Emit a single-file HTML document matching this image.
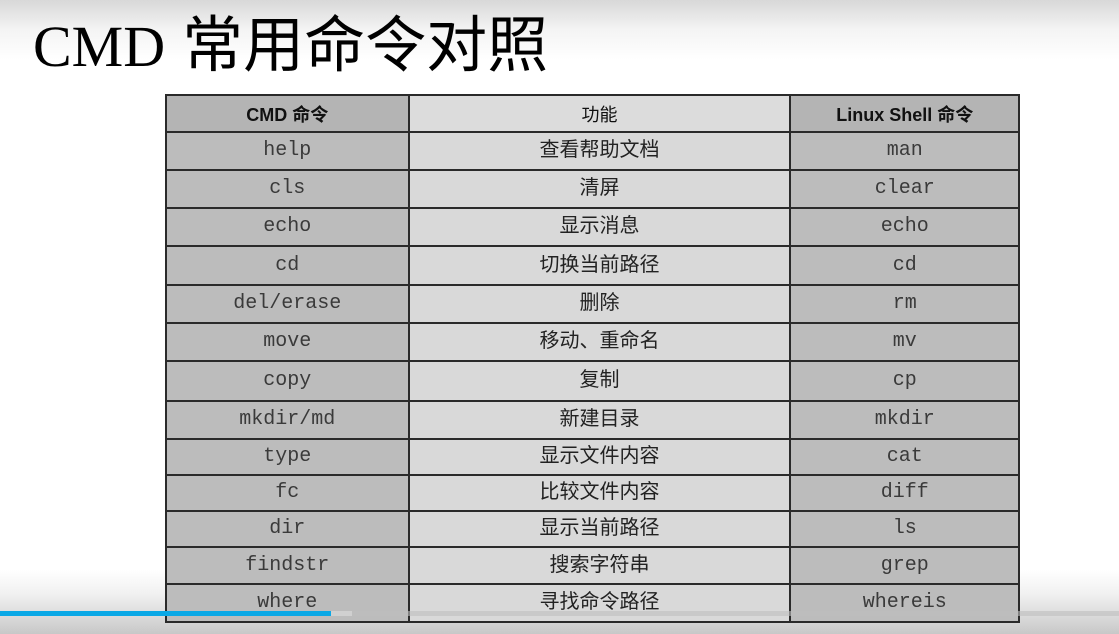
<!DOCTYPE html><html><head><meta charset="utf-8"><style>
body{margin:0;width:1119px;height:634px;overflow:hidden;background:linear-gradient(#d8d8d8 0,#f4f4f4 30px,#fff 60px,#fff 570px,#f0f0f0 595px,#c8c8c8 634px);position:relative;font-family:"Liberation Sans","Noto Sans CJK SC",sans-serif}
.t{position:absolute;left:33px;top:10px;font-size:61px;color:#000;white-space:nowrap;line-height:70px}
.t b{font-family:"Liberation Serif",serif;font-weight:normal;font-size:58px;margin-right:0}
table{position:absolute;left:165px;top:94px;border-collapse:collapse;width:855px}
td{border:2px solid #2a2a2a;text-align:center;padding:0;font-size:20px;line-height:20px;color:#3a3a3a;font-family:"Liberation Mono",monospace}
td.c{font-family:"Noto Sans CJK SC",sans-serif;font-size:20px;line-height:20px;background:#d9d9d9;color:#222;padding-bottom:6px}
td.a{background:#bcbcbc}
tr.h td{font-family:"Liberation Sans","Noto Sans CJK SC",sans-serif;font-weight:bold;font-size:18px;color:#111;background:#b4b4b4;padding-top:2px}
tr.h td.c{background:#dcdcdc;font-weight:normal;padding-bottom:0}
.bar{position:absolute;left:0;top:611px;height:5px;width:331px;background:#0aa8e6}
.bar2{position:absolute;left:331px;top:611px;height:5px;width:21px;background:#d0d0d0}
.bar3{position:absolute;left:352px;top:611px;height:5px;width:767px;background:rgba(190,190,190,.6)}
</style></head><body>
<div class="t"><b>CMD</b> 常用命令对照</div>
<table>
<colgroup><col style="width:243px"><col style="width:383px"><col style="width:229px"></colgroup>
<tr class="h" style="height:37px"><td>CMD 命令</td><td class="c">功能</td><td>Linux Shell 命令</td></tr>
<tr style="height:38px"><td class="a">help</td><td class="c">查看帮助文档</td><td class="a">man</td></tr>
<tr style="height:38px"><td class="a">cls</td><td class="c">清屏</td><td class="a">clear</td></tr>
<tr style="height:38px"><td class="a">echo</td><td class="c">显示消息</td><td class="a">echo</td></tr>
<tr style="height:39px"><td class="a">cd</td><td class="c">切换当前路径</td><td class="a">cd</td></tr>
<tr style="height:38px"><td class="a">del/erase</td><td class="c">删除</td><td class="a">rm</td></tr>
<tr style="height:38px"><td class="a">move</td><td class="c">移动、重命名</td><td class="a">mv</td></tr>
<tr style="height:40px"><td class="a">copy</td><td class="c">复制</td><td class="a">cp</td></tr>
<tr style="height:38px"><td class="a">mkdir/md</td><td class="c">新建目录</td><td class="a">mkdir</td></tr>
<tr style="height:36px"><td class="a">type</td><td class="c">显示文件内容</td><td class="a">cat</td></tr>
<tr style="height:36px"><td class="a">fc</td><td class="c">比较文件内容</td><td class="a">diff</td></tr>
<tr style="height:36px"><td class="a">dir</td><td class="c">显示当前路径</td><td class="a">ls</td></tr>
<tr style="height:37px"><td class="a">findstr</td><td class="c">搜索字符串</td><td class="a">grep</td></tr>
<tr style="height:38px"><td class="a">where</td><td class="c">寻找命令路径</td><td class="a">whereis</td></tr>
</table>
<div class="bar3"></div><div class="bar"></div><div class="bar2"></div>
</body></html>
